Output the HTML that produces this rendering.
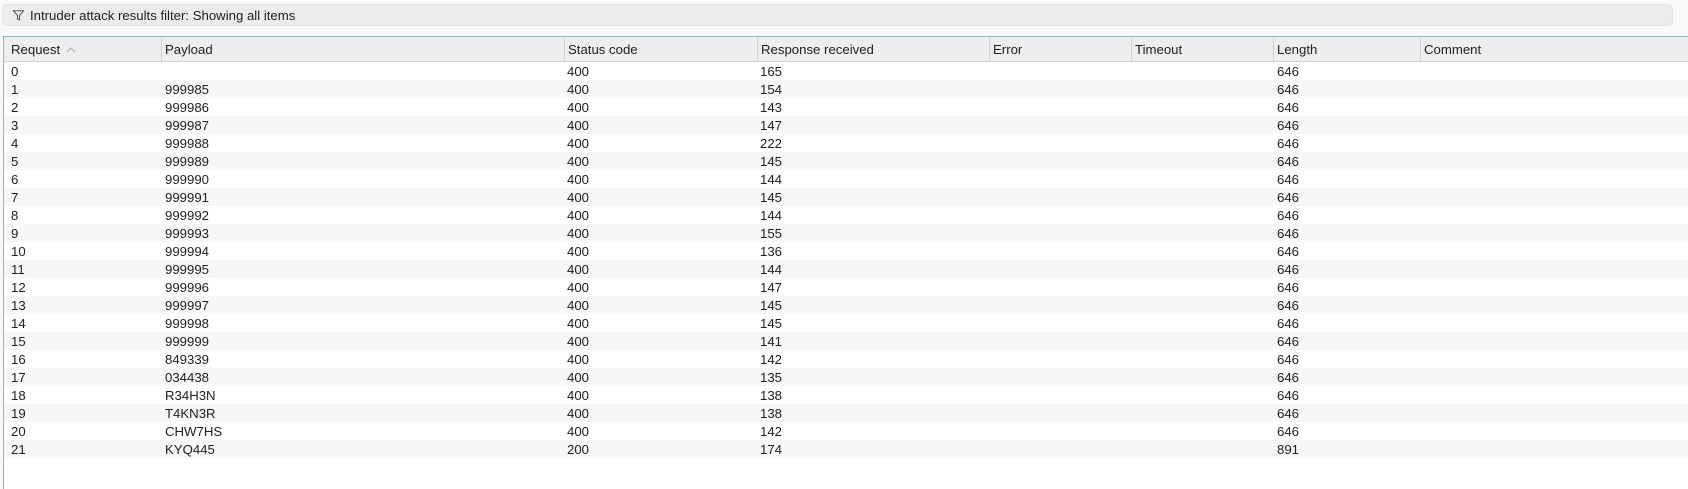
<!DOCTYPE html>
<html><head><meta charset="utf-8"><style>
*{margin:0;padding:0;box-sizing:border-box}
body{width:1688px;height:489px;background:#f9f9f9;font-family:"Liberation Sans","DejaVu Sans",sans-serif;font-size:13.2px;color:#1e1e1e;position:relative;overflow:hidden}
.filter{position:absolute;left:2px;top:4px;width:1671px;height:22px;background:#ececec;border-radius:5px;border:1px solid #e4e4e4}
.filter svg{position:absolute;left:10px;top:5px}
.filter span{position:absolute;left:27px;top:3px;white-space:nowrap}
.table{position:absolute;left:3px;top:36px;right:0;bottom:0;background:#fff;border-left:1px solid #8fb4dc;border-top:1px solid #8fb4dc}
.hdr{position:absolute;left:0;top:0;right:0;height:25px;background:#eeeeee;border-bottom:1px solid #d2d2d2}
.hdr div{position:absolute;top:0;height:24px;line-height:19px;padding-top:3px;border-right:1px solid #d2d2d2;padding-left:3px;white-space:nowrap}
.row{position:absolute;left:0;right:0;height:18px;line-height:20px}
.row span{position:absolute;top:0;white-space:nowrap}
.c1{left:7px}.c2{left:161px}.c3{left:563px}.c4{left:756px}.c7{left:1273px}
</style></head><body>
<div class="filter"><svg width="11" height="11" viewBox="0 0 11 11"><path d="M0.5 0.8H10.5L6.5 5.5V10L4.5 9V5.5Z" fill="none" stroke="#555" stroke-width="1"/></svg><span>Intruder attack results filter: Showing all items</span></div>
<div class="table">
<div class="hdr">
<div style="left:0;width:158px;padding-left:7px">Request <svg width="10" height="8" viewBox="0 0 10 8" style="margin-left:2px"><path d="M1 6L5 2L9 6" fill="none" stroke="#aaa" stroke-width="1"/></svg></div>
<div style="left:158px;width:403px">Payload</div>
<div style="left:561px;width:193px">Status code</div>
<div style="left:754px;width:232px">Response received</div>
<div style="left:986px;width:142px">Error</div>
<div style="left:1128px;width:142px">Timeout</div>
<div style="left:1270px;width:147px">Length</div>
<div style="left:1417px;width:300px;border-right:none">Comment</div>
</div>
</div>
<div style="position:absolute;left:4px;top:62px;right:0">
<div class="row" style="top:0px;background:#fff"><span class="c1">0</span><span class="c3">400</span><span class="c4">165</span><span class="c7">646</span></div>
<div class="row" style="top:18px;background:#f7f7f7"><span class="c1">1</span><span class="c2">999985</span><span class="c3">400</span><span class="c4">154</span><span class="c7">646</span></div>
<div class="row" style="top:36px;background:#fff"><span class="c1">2</span><span class="c2">999986</span><span class="c3">400</span><span class="c4">143</span><span class="c7">646</span></div>
<div class="row" style="top:54px;background:#f7f7f7"><span class="c1">3</span><span class="c2">999987</span><span class="c3">400</span><span class="c4">147</span><span class="c7">646</span></div>
<div class="row" style="top:72px;background:#fff"><span class="c1">4</span><span class="c2">999988</span><span class="c3">400</span><span class="c4">222</span><span class="c7">646</span></div>
<div class="row" style="top:90px;background:#f7f7f7"><span class="c1">5</span><span class="c2">999989</span><span class="c3">400</span><span class="c4">145</span><span class="c7">646</span></div>
<div class="row" style="top:108px;background:#fff"><span class="c1">6</span><span class="c2">999990</span><span class="c3">400</span><span class="c4">144</span><span class="c7">646</span></div>
<div class="row" style="top:126px;background:#f7f7f7"><span class="c1">7</span><span class="c2">999991</span><span class="c3">400</span><span class="c4">145</span><span class="c7">646</span></div>
<div class="row" style="top:144px;background:#fff"><span class="c1">8</span><span class="c2">999992</span><span class="c3">400</span><span class="c4">144</span><span class="c7">646</span></div>
<div class="row" style="top:162px;background:#f7f7f7"><span class="c1">9</span><span class="c2">999993</span><span class="c3">400</span><span class="c4">155</span><span class="c7">646</span></div>
<div class="row" style="top:180px;background:#fff"><span class="c1">10</span><span class="c2">999994</span><span class="c3">400</span><span class="c4">136</span><span class="c7">646</span></div>
<div class="row" style="top:198px;background:#f7f7f7"><span class="c1">11</span><span class="c2">999995</span><span class="c3">400</span><span class="c4">144</span><span class="c7">646</span></div>
<div class="row" style="top:216px;background:#fff"><span class="c1">12</span><span class="c2">999996</span><span class="c3">400</span><span class="c4">147</span><span class="c7">646</span></div>
<div class="row" style="top:234px;background:#f7f7f7"><span class="c1">13</span><span class="c2">999997</span><span class="c3">400</span><span class="c4">145</span><span class="c7">646</span></div>
<div class="row" style="top:252px;background:#fff"><span class="c1">14</span><span class="c2">999998</span><span class="c3">400</span><span class="c4">145</span><span class="c7">646</span></div>
<div class="row" style="top:270px;background:#f7f7f7"><span class="c1">15</span><span class="c2">999999</span><span class="c3">400</span><span class="c4">141</span><span class="c7">646</span></div>
<div class="row" style="top:288px;background:#fff"><span class="c1">16</span><span class="c2">849339</span><span class="c3">400</span><span class="c4">142</span><span class="c7">646</span></div>
<div class="row" style="top:306px;background:#f7f7f7"><span class="c1">17</span><span class="c2">034438</span><span class="c3">400</span><span class="c4">135</span><span class="c7">646</span></div>
<div class="row" style="top:324px;background:#fff"><span class="c1">18</span><span class="c2">R34H3N</span><span class="c3">400</span><span class="c4">138</span><span class="c7">646</span></div>
<div class="row" style="top:342px;background:#f7f7f7"><span class="c1">19</span><span class="c2">T4KN3R</span><span class="c3">400</span><span class="c4">138</span><span class="c7">646</span></div>
<div class="row" style="top:360px;background:#fff"><span class="c1">20</span><span class="c2">CHW7HS</span><span class="c3">400</span><span class="c4">142</span><span class="c7">646</span></div>
<div class="row" style="top:378px;background:#f7f7f7"><span class="c1">21</span><span class="c2">KYQ445</span><span class="c3">200</span><span class="c4">174</span><span class="c7">891</span></div>
</div>
</body></html>
